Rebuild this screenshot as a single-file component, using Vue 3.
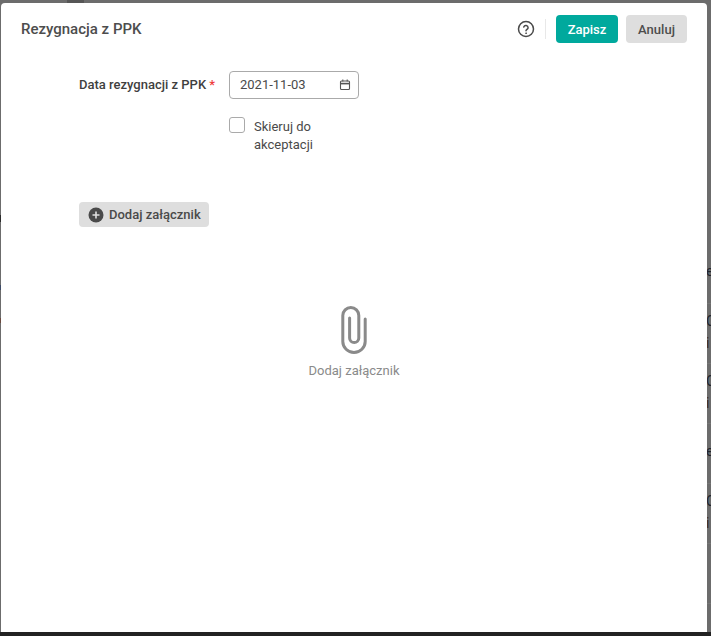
<script setup>
const backdropMarks = [
  { t: 'e', top: 263, c: '#20242c' }, { t: 'C', top: 313, c: '#20242c' }, { t: 'i', top: 335, c: '#3a2a20' },
  { t: 'C', top: 373, c: '#20242c' }, { t: 'i', top: 395, c: '#3a2a20' }, { t: 'e', top: 443, c: '#20242c' },
  { t: 'C', top: 493, c: '#20242c' }, { t: 'i', top: 515, c: '#3a2a20' }
]
const backdropLines = [303, 363, 423, 483, 543, 603]
const backdropEdges = [
  { top: 215, height: 7, color: '#2b2b2b' },
  { top: 285, height: 5, color: '#3d4a66' },
  { top: 318, height: 5, color: '#6a4a40' }
]
</script>

<template>
  <div class="page">
    <div class="backdrop">
      <span class="top-shade"></span>
      <span v-for="e in backdropEdges" :key="e.top" class="edge" :style="{ top: e.top + 'px', height: e.height + 'px', background: e.color }"></span>
      <span v-for="l in backdropLines" :key="l" class="line" :style="{ top: l + 'px' }"></span>
      <span v-for="m in backdropMarks" :key="m.top" class="mark" :style="{ top: m.top + 'px', color: m.c }">{{ m.t }}</span>
    </div>
    <section class="modal">
      <header class="head">
        <h1 class="title">Rezygnacja z PPK</h1>
        <div class="actions">
          <svg class="help" viewBox="0 0 24 24" width="18" height="18" fill="none" stroke="#4a4a4a" stroke-width="2" stroke-linecap="round">
            <circle cx="12" cy="12" r="10" />
            <path d="M9 9.3a3 3 0 0 1 5.8 1c0 2-2.8 2.4-2.8 4" />
            <circle cx="12" cy="17.6" r="0.6" fill="#4a4a4a" stroke-width="1" />
          </svg>
          <span class="divider"></span>
          <button class="btn primary">Zapisz</button>
          <button class="btn ghost">Anuluj</button>
        </div>
      </header>

      <div class="form">
        <div class="row">
          <label class="label">Data rezygnacji z PPK <i class="req">*</i></label>
          <div class="input">
            <span>2021-11-03</span>
            <svg viewBox="0 0 12 12" width="12" height="12" fill="none" stroke="#555" stroke-width="1.1">
              <rect x="1.5" y="2" width="9" height="8.5" rx="1" />
              <path d="M1.5 4.6h9" stroke-width="1.6" />
              <path d="M3.8 .6v2M8.2 .6v2" />
            </svg>
          </div>
        </div>
        <div class="check">
          <span class="box"></span>
          <span class="check-label">Skieruj do<br />akceptacji</span>
        </div>
        <button class="add">
          <svg viewBox="0 0 16 16" width="16" height="16">
            <circle cx="8" cy="8" r="7.5" fill="#4a4a4a" />
            <path d="M8 4.5v7M4.5 8h7" stroke="#e0e0e0" stroke-width="1.6" />
          </svg>
          Dodaj załącznik
        </button>
      </div>

      <div class="empty">
        <svg viewBox="0 0 26 48" width="26" height="48" fill="none" stroke="#8a8a8a" stroke-width="3" stroke-linecap="round">
          <path d="M24.2 13v22.5a11.2 11 0 0 1-22.4 0V9.5a8 8 0 0 1 16 0V32a4.6 4.6 0 0 1-9.2 0V12" />
        </svg>
        <span>Dodaj załącznik</span>
      </div>
    </section>
  </div>
</template>

<style>
html, body { margin: 0; overflow: hidden; }
</style>

<style scoped>
.page {
  position: relative;
  width: 711px;
  height: 636px;
  overflow: hidden;
  box-sizing: border-box;
  padding: 3px 4px 4px 1px;
  background: #6c6c6c;
  border-bottom: 4px solid #222;
  font-family: Roboto, "Liberation Sans", sans-serif;
}
.backdrop { position: absolute; inset: 0; }
.top-shade {
  position: absolute;
  left: 67px;
  top: 0;
  width: 17px;
  height: 3px;
  background: #565656;
}
.edge { position: absolute; left: 0; width: 1px; }
.line {
  position: absolute;
  left: 707px;
  width: 4px;
  height: 1px;
  background: #767676;
}
.mark {
  position: absolute;
  left: 706px;
  font-size: 14px;
  line-height: 16px;
}
.modal {
  position: relative;
  height: 629px;
  box-sizing: border-box;
  background: #fff;
  border-radius: 4px 4px 0 0;
  color: #4a4a4a;
  display: flex;
  flex-direction: column;
}
.head {
  display: flex;
  align-items: center;
  justify-content: space-between;
  padding: 12px 20px 0;
  height: 28px;
}
.title {
  margin: 0;
  font-size: 15px;
  font-weight: 500;
  color: #4d4d4d;
}
.actions { display: flex; align-items: center; }
.help { margin-right: 10px; }
.divider {
  width: 1px;
  height: 20px;
  background: #e8e8e8;
  margin-right: 10px;
}
.btn {
  height: 28px;
  border: 0;
  border-radius: 4px;
  font: 500 13px Roboto, sans-serif;
  padding: 0;
}
.primary { width: 62px; background: #00a99d; color: #fff; margin-right: 8px; }
.ghost { width: 61px; background: #dedede; color: #4d4d4d; }
.form {
  padding: 28px 0 0 78px;
  font-size: 13px;
  display: flex;
  flex-direction: column;
  align-items: flex-start;
}
.row { display: flex; align-items: center; }
.label {
  width: 150px;
  font-weight: 500;
  color: #3f3f3f;
  padding-bottom: 1px;
}
.req { font-style: normal; color: #ee3b3b; }
.input {
  width: 130px;
  height: 28px;
  box-sizing: border-box;
  border: 1px solid #aaa;
  border-radius: 4px;
  padding: 0 7px 1px 10px;
  display: flex;
  align-items: center;
  justify-content: space-between;
  color: #4a4a4a;
}
.check {
  margin: 18px 0 0 150px;
  display: flex;
  align-items: flex-start;
  line-height: 18px;
}
.box {
  width: 16px;
  height: 16px;
  box-sizing: border-box;
  border: 1px solid #aaa;
  border-radius: 3px;
  margin-right: 9px;
}
.check-label { color: #4a4a4a; padding-top: 1px; }
.add {
  margin-top: 48px;
  width: 130px;
  height: 25px;
  border: 0;
  border-radius: 4px;
  background: #dedede;
  color: #4a4a4a;
  font: 500 13px Roboto, sans-serif;
  display: flex;
  align-items: center;
  gap: 5px;
  padding: 0 0 0 9px;
}
.empty {
  margin-top: 79px;
  display: flex;
  flex-direction: column;
  align-items: center;
  gap: 9px;
  font-size: 13px;
  color: #8a8a8a;
}
</style>
